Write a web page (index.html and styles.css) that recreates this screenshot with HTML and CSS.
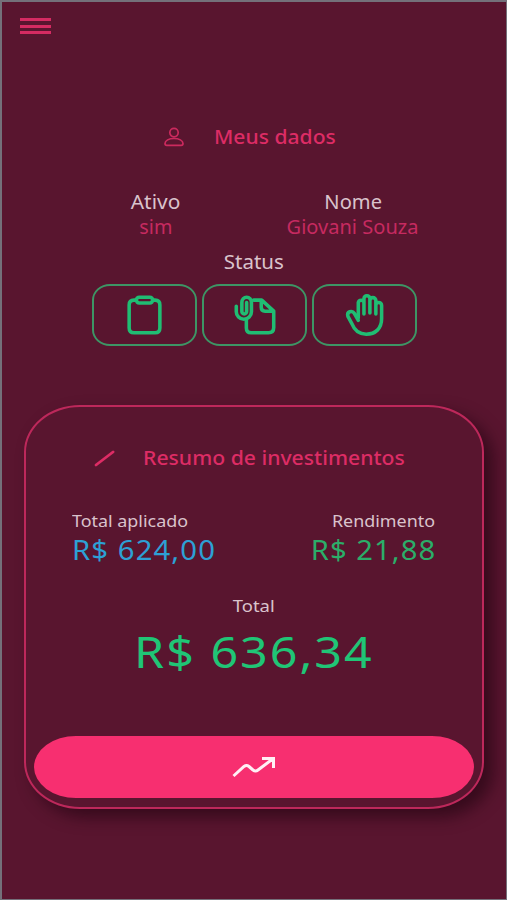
FILE: index.html
```html
<!DOCTYPE html>
<html lang="pt-BR">
<head>
<meta charset="utf-8">
<title>Meus dados</title>
<link rel="stylesheet" href="styles.css">
</head>
<body>
<main class="screen">
  <header class="topbar">
    <div class="menu"><i></i><i></i><i></i></div>
  </header>
  <section class="profile">
    <h2 class="heading heading-profile">
      <svg class="user-icon" viewBox="0 0 22 20" preserveAspectRatio="none"><circle cx="11" cy="5.6" r="4.2"/><path d="M2 16.5c0-3 4-5 9-5s9 2 9 5q0 1.8-1.8 1.8H3.8Q2 18.300 2 16.500z"/></svg>
      <span class="t t-meus">Meus dados</span>
    </h2>
    <div class="fields">
      <div class="field ativo"><span class="t t-ativo">Ativo</span><span class="t t-sim accent">sim</span></div>
      <div class="field nome"><span class="t t-nome">Nome</span><span class="t t-giovani accent">Giovani Souza</span></div>
    </div>
    <div class="status-label"><span class="t t-status">Status</span></div>
    <div class="statuses">
      <div class="status"><svg viewBox="0 0 50 50"><path d="M16 9.500h-2.500q-5 0-5 5v24q0 5 5 5h22q5 0 5-5v-24q0-5-5-5H33"/><rect x="16" y="6.500" width="17" height="6" rx="3"/></svg></div>
      <div class="status"><svg viewBox="0 0 50 50"><path d="M23.500 9.500H32l12.500 11.500v17q0 5.500-5.500 5.500H21q-5 0-5-5V30M31.500 9.500V17q0 4 4 4h9"/><path d="M5.500 16v5.500a7.900 8 0 0 0 15.800 0V12a5 5.500 0 0 0-10 0v9a2.500 3 0 0 0 5 0v-9"/></svg></div>
      <div class="status"><svg viewBox="0 0 50 50"><path d="M18 28V12a3 3 0 0 1 5.900 0V24M23.900 23V8a3.100 3.100 0 0 1 6.200 0v15M30.100 23V10a3.100 3.100 0 0 1 6.200 0v14M36.300 24v-9a3 3 0 0 1 6 0v14c0 10-6.300 16-16 16-8 0-12.500-4.500-15-11L7.200 26.500c-1.500-5 4.300-7 6.800-3l4 7"/></svg></div>
    </div>
  </section>
  <section class="card">
    <h2 class="heading heading-card">
      <svg class="line-icon" viewBox="0 0 22 18"><path d="M3 16L20 3"/></svg>
      <span class="t t-resumo">Resumo de investimentos</span>
    </h2>
    <div class="amounts">
      <div class="amount"><span class="t small t-aplicado">Total aplicado</span><span class="t money blue t-624">R$ 624,00</span></div>
      <div class="amount right"><span class="t small t-rend">Rendimento</span><span class="t money green t-21">R$ 21,88</span></div>
    </div>
    <div class="total"><span class="t small t-total">Total</span><span class="t grand t-636">R$ 636,34</span></div>
    <div class="action"><svg viewBox="0 0 46 24"><path d="M2.500 21L13 11.500q2.500-2 5 0l4 3.500q2.500 2 5 0L41 4.500M31 3.500h11.500V13"/></svg></div>
  </section>
</main>
</body>
</html>
```
FILE: styles.css
```css
* { box-sizing: border-box; }
body { margin: 0; background: #59152f; font-family: "Noto Sans", "Open Sans", sans-serif; }
svg { display: block; fill: none; stroke: currentColor; stroke-linecap: round; stroke-linejoin: round; }
.screen { width: 507px; height: 900px; overflow: hidden; color: #d9c3cc; background: #59152f; border: solid #74707a; border-width: 2px 1px 1px 2px; }
.topbar { height: 121px; padding: 16px 0 0 18px; }
.menu { display: flex; flex-direction: column; gap: 3.500px; width: 31px; }
.menu i { height: 3px; background: #d52b62; }
.heading { margin: 0; display: flex; align-items: center; height: 28px; color: #dd2c65; font-size: 19px; font-weight: 500; }
.heading-profile { padding-left: 161px; }
.user-icon { width: 22px; height: 20px; stroke-width: 1.700; margin-right: 29px; color: #cb2a5e; }
.t { display: block; white-space: nowrap; transform-origin: left center; width: max-content; }
.fields { display: flex; justify-content: center; margin-top: 39px; padding-left: 1px; font-size: 19px; line-height: 24.500px; }
.field { display: flex; flex-direction: column; align-items: center; width: 197px; }
.field .t, .status-label .t, .total .t { transform-origin: center; }
.accent { color: #c62a60; }
.status-label { display: flex; justify-content: center; height: 24px; margin-top: 11px; font-size: 19px; line-height: 24px; }
.statuses { display: flex; gap: 5px; margin: 10px 0 0 90px; }
.status { width: 105px; height: 62px; border: 2px solid #3d9565; border-radius: 18px / 16px; color: #20bd73; display: flex; align-items: center; justify-content: center; }
.status svg { width: 48px; height: 48px; stroke-width: 3.700; }
.card { width: 460px; height: 404px; margin: 59px 0 0 22px; border: 2px solid #bd285b; border-radius: 56px / 47px; box-shadow: 9px 8px 16px rgba(30,3,15,.6); background: #59152f; }
.heading-card { padding: 0 0 0 67px; margin-top: 37px; }
.line-icon { width: 22px; height: 18px; stroke-width: 2.800; margin-right: 28px; }
.amounts { display: flex; justify-content: space-between; padding: 0 47px 0 46px; margin-top: 37px; }
.amount { display: flex; flex-direction: column; }
.right { align-items: flex-end; }
.right .t { transform-origin: right center; }
.small { font-size: 16.500px; line-height: 24px; }
.money { font-size: 27px; line-height: 34px; letter-spacing: 1px; }
.blue { color: #2da0d5; }
.green { color: #2bae69; }
.total { display: flex; flex-direction: column; align-items: center; margin-top: 27px; }
.grand { color: #20c576; font-size: 44px; line-height: 66px; letter-spacing: 1.800px; }
.action { margin: 52px 8px 0; height: 62px; border-radius: 42px / 31px; background: #f72f70; color: #fff0f5; display: flex; align-items: center; justify-content: center; }
.action svg { width: 46px; height: 24px; stroke-width: 3; stroke-linecap: butt; stroke-linejoin: miter; }

/* Widened lettering */
.t-meus { transform: scaleX(1.11); }
.t-ativo { transform: scaleX(1.1); }
.t-sim { transform: scaleX(1.04); }
.t-nome { transform: scaleX(1.06); }
.t-giovani { transform: scaleX(1.055); }
.t-status { transform: scaleX(1.08); }
.t-resumo { transform: scaleX(1.115); }
.t-aplicado, .t-rend { transform: scaleX(1.085); }
.t-624 { transform: scaleX(1.085); }
.t-21 { transform: scaleX(1.08); margin-right: -1px; }
.t-total { transform: scaleX(1.12); }
.t-636 { transform: scaleX(1.1); }
```
